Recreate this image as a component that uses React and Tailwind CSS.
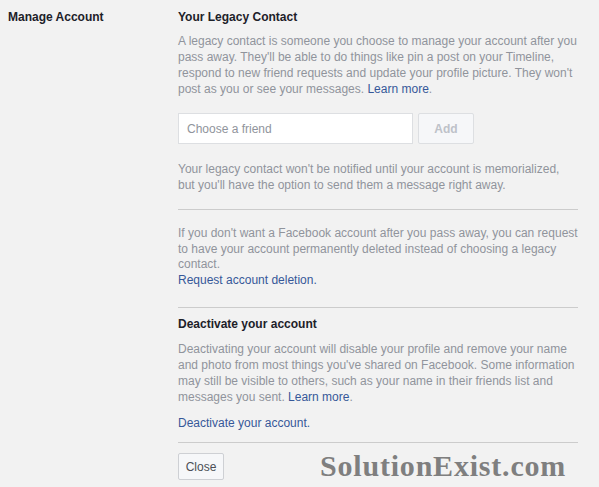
export default function App() {
  const font = { fontFamily: '"Liberation Sans", Arial, Helvetica, sans-serif' };
  return (
    <div className="w-[599px] h-[487px] bg-[#f2f2f2] overflow-hidden flex text-[12px] leading-[16px]" style={font}>
      <div className="w-[178px] shrink-0 pl-[8px] pt-[9px]">
        <div className="font-bold text-[#1d2129]">Manage Account</div>
      </div>
      <div className="w-[400px] pt-[9px] flex flex-col">
        <div className="font-bold text-[#1d2129]">Your Legacy Contact</div>
        <p className="mt-[8px] text-[#90949c]">
          A legacy contact is someone you choose to manage your account after you pass away. They'll be able to do things like pin a post on your Timeline, respond to new friend requests and update your profile picture. They won't post as you or see your messages. <span className="text-[#365899]">Learn more</span>.
        </p>
        <div className="mt-[16px] flex gap-[5px]">
          <div className="w-[235px] h-[31px] bg-white border border-[#dddfe2] flex items-center px-[8px] text-[#90949c]">
            Choose a friend
          </div>
          <div className="w-[56px] h-[31px] bg-[#f6f7f9] border border-[#dddfe2] rounded-[2px] flex items-center justify-center font-bold text-[#bec2c9]">
            Add
          </div>
        </div>
        <p className="mt-[17px] text-[#90949c]">
          Your legacy contact won't be notified until your account is memorialized, but you'll have the option to send them a message right away.
        </p>
        <div className="mt-[16px] h-px bg-[#cccccc]" />
        <p className="mt-[16px] text-[#90949c] leading-[15.7px]">
          If you don't want a Facebook account after you pass away, you can request to have your account permanently deleted instead of choosing a legacy contact.
        </p>
        <div className="text-[#365899] leading-[15px]">Request account deletion.</div>
        <div className="mt-[19px] h-px bg-[#cccccc]" />
        <div className="mt-[8px] font-bold text-[#1d2129]">Deactivate your account</div>
        <p className="mt-[9px] text-[#90949c]">
          Deactivating your account will disable your profile and remove your name and photo from most things you've shared on Facebook. Some information may still be visible to others, such as your name in their friends list and messages you sent. <span className="text-[#365899]">Learn more</span>.
        </p>
        <div className="mt-[10px] text-[#365899]">Deactivate your account.</div>
        <div className="mt-[11px] h-px bg-[#cccccc]" />
        <div className="mt-[10px] flex items-start">
          <div className="w-[46px] h-[27px] bg-[#f6f7f9] border border-[#ced0d4] rounded-[2px] flex items-center justify-center text-[#4b4f56] text-[12px]">
            Close
          </div>
          <div
            className="ml-[96px] -mt-[4px] text-[30px] leading-[34px] font-bold text-[#7f7f7f] tracking-[0.8px]"
            style={{ fontFamily: '"Liberation Serif", "Times New Roman", serif' }}
          >
            SolutionExist.com
          </div>
        </div>
      </div>
    </div>
  );
}
